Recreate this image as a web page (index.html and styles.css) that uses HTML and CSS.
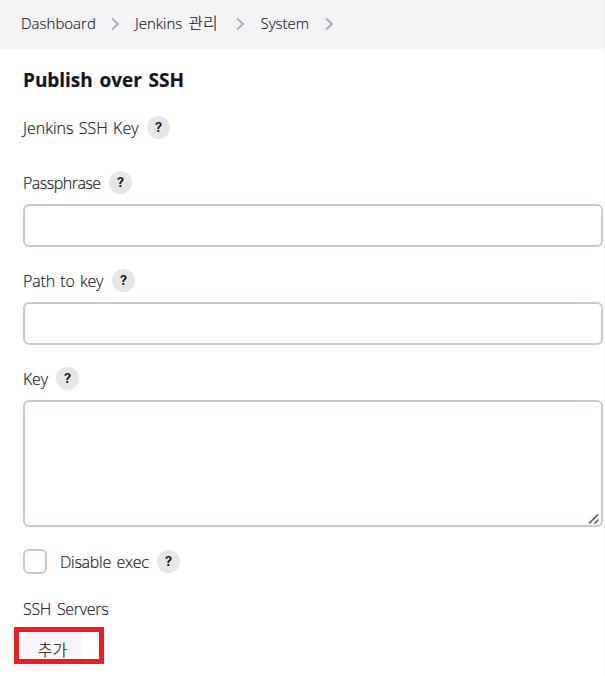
FILE: index.html
```html
<!DOCTYPE html>
<html lang="ko">
<head>
<meta charset="utf-8">
<title>System - Jenkins</title>
<link rel="stylesheet" href="styles.css">
</head>
<body>
<div class="page">
  <nav class="crumbs">
    <span class="crumb dash">Dashboard</span>
    <svg class="chev" viewBox="0 0 8 14"><path d="M1 1.5L7 7l-6 5.5"/></svg>
    <span class="crumb manage">Jenkins <span class="ko">관리</span></span>
    <svg class="chev" viewBox="0 0 8 14"><path d="M1 1.5L7 7l-6 5.5"/></svg>
    <span class="crumb system">System</span>
    <svg class="chev" viewBox="0 0 8 14"><path d="M1 1.5L7 7l-6 5.5"/></svg>
  </nav>
  <main class="content">
    <h1 class="title">Publish over SSH</h1>
    <div class="label first"><span class="w-ssh">Jenkins SSH Key</span><span class="help">?</span></div>
    <div class="label"><span class="w-pass">Passphrase</span><span class="help">?</span></div>
    <input class="field" type="text">
    <div class="label next"><span class="w-path">Path to key</span><span class="help">?</span></div>
    <input class="field" type="text">
    <div class="label next"><span class="w-key">Key</span><span class="help">?</span></div>
    <div class="area">
      <svg class="grip" viewBox="0 0 10 10"><path d="M0 9.5L9 .5M5.5 9.5L9.5 5.5"/></svg>
    </div>
    <div class="check"><span class="box"></span><span class="w-exec">Disable exec</span><span class="help">?</span></div>
    <div class="servers"><span>SSH Servers</span></div>
    <div class="add"><button class="button" type="button">추가</button><span class="highlight"></span></div>
  </main>
</div>
</body>
</html>
```
FILE: styles.css
```css
* { box-sizing: border-box; }
body {
  margin: 0;
  background: #fff;
  color: #14141f;
  font: 300 16px/24px "Open Sans", "Noto Sans CJK KR", sans-serif;
  -webkit-text-stroke: .15px #14141f;
}
.page { height: 676px; overflow: hidden; border-right: 1px solid #f0f0f2; }
.crumbs {
  height: 49px;
  padding: 0 0 2px 21px;
  display: flex;
  align-items: center;
  background: #f4f4f7;
  font-size: 15px;
  white-space: nowrap;
}
.crumb { height: 25px; }
.dash { width: 90px; }
.manage { width: 101px; word-spacing: 2px; }
.system { width: 65px; padding-left: .5px; }
.ko { font-size: 16px; line-height: 20px; }
.chev { width: 8px; height: 14px; margin-right: 16px; fill: none; stroke: #a9a7b8; stroke-width: 1.8; }
.content { padding: 19px 1px 0 23px; }
.title {
  margin: 0;
  height: 24px;
  font-size: 19px;
  line-height: 24px;
  font-weight: 700;
  letter-spacing: -.05px;
  word-spacing: 2px;
}
.label { display: flex; align-items: center; height: 23px; margin-bottom: 10px; white-space: nowrap; }
.first { margin-top: 24px; margin-bottom: 32px; }
.next { margin-top: 22px; margin-bottom: 10px; }
.help {
  width: 23px;
  height: 23px;
  border-radius: 50%;
  background: #e6e6e7;
  font: 600 13px/22px Inter, sans-serif;
  text-align: center;
}
.w-ssh { width: 124px; word-spacing: 1.2px; }
.w-pass { width: 86px; letter-spacing: -.5px; }
.w-path { width: 89px; letter-spacing: -.15px; word-spacing: 1.2px; }
.w-key { width: 33px; letter-spacing: -.2px; }
.w-exec { width: 97px; letter-spacing: -.25px; word-spacing: 1.5px; }
.field { display: block; width: 100%; height: 43px; border: 2px solid #c3ccd1; border-radius: 6px; background: #fff; }
.area { position: relative; height: 127px; border: 2px solid #c3ccd1; border-radius: 6px; }
.grip { position: absolute; right: 2px; bottom: 1px; width: 10px; height: 10px; fill: none; stroke: #4b4b50; stroke-width: 1.5; }
.check { display: flex; align-items: center; height: 25px; margin-top: 22px; white-space: nowrap; }
.box { width: 24px; height: 25px; margin-right: 13px; border: 2px solid #c3ccd1; border-radius: 6px; }
.servers { margin-top: 23px; height: 24px; letter-spacing: -.3px; word-spacing: 2px; }
.add { position: relative; margin-top: 11px; height: 38px; }
.button {
  width: 59px;
  height: 38px;
  padding: 0 0 5px;
  border: 0;
  border-radius: 8px;
  background: #f7f7f9;
  color: #14141f;
  font: 300 16px/24px "Noto Sans CJK KR", sans-serif;
}
.highlight { position: absolute; left: -9px; top: -5px; width: 90px; height: 37px; border: 5px solid #ee1c24; }
```
